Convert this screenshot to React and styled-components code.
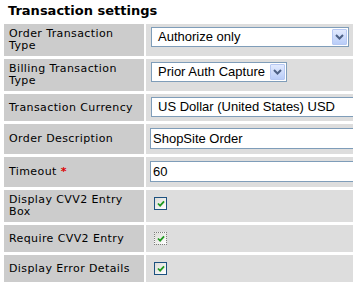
import React from 'react'
import styled, { createGlobalStyle } from 'styled-components'

const GlobalStyle = createGlobalStyle`
  html, body {
    margin: 0;
    padding: 0;
    background: #ffffff;
    overflow: hidden;
  }
`

const Page = styled.div`
  padding: 0 2px;
  font-family: "DejaVu Sans", Verdana, sans-serif;
  color: #000;
`

const Title = styled.h2`
  margin: 0 0 0 6px;
  height: 21px;
  padding-top: 3px;
  box-sizing: border-box;
  font-size: 13px;
  line-height: 16px;
  font-weight: bold;
`

const Table = styled.table`
  border-collapse: separate;
  border-spacing: 2px 3px;
  width: 430px;
`

const Label = styled.td`
  width: 130px;
  padding: 4px 5px;
  background: #cccccc;
  font-size: 11px;
  line-height: 12px;
  letter-spacing: 0.4px;
  vertical-align: middle;
`

const Value = styled.td`
  padding: 3px 4px 4px 4px;
  background: #dddddd;
  vertical-align: top;
`

const Required = styled.span`
  color: #dd0000;
  font-weight: bold;
`

const SelectBox = styled.div`
  display: flex;
  width: ${(p) => p.width}px;
  height: 20px;
  margin: 0 1px;
  box-sizing: border-box;
  border: 1px solid #7f9db9;
  background: #fff;
`

const SelectText = styled.div`
  flex: 1;
  padding-left: 6px;
  font-family: "Liberation Sans", Arial, sans-serif;
  font-size: 13px;
  line-height: 18px;
  white-space: nowrap;
  overflow: hidden;
`

const ArrowButton = styled.div`
  width: 15px;
  margin: 1px;
  box-sizing: border-box;
  border: 1px solid #b6c8f3;
  border-radius: 1px;
  background: linear-gradient(#e2eafe, #b9cdf8);
  display: flex;
  align-items: center;
  justify-content: center;
`

const TextInput = styled.input`
  display: block;
  width: 260px;
  height: 21px;
  margin: 1px 0;
  box-sizing: border-box;
  border: 1px solid #7f9db9;
  padding: 0 2px;
  font-family: "Liberation Sans", Arial, sans-serif;
  font-size: 13px;
  color: #000;
  background: #fff;
  outline: none;
`

const Check = styled.span`
  display: flex;
  align-items: center;
  justify-content: center;
  width: 13px;
  height: 13px;
  margin: 4px 4px 3px 4px;
  box-sizing: border-box;
  border: 1px ${(p) => (p.focused ? 'dotted #7d7d7d' : 'solid #1c5180')};
  background: linear-gradient(135deg, #dcdcd7, #ffffff);
`

const Select = ({ width, children, arrow = true }) => (
  <SelectBox width={width}>
    <SelectText>{children}</SelectText>
    {arrow && (
      <ArrowButton>
        <svg width="9" height="6" viewBox="0 0 9 6">
          <polyline points="1,1 4.5,4.5 8,1" fill="none" stroke="#4d6185" strokeWidth="2" />
        </svg>
      </ArrowButton>
    )}
  </SelectBox>
)

const CheckBox = ({ focused }) => (
  <Check focused={focused}>
    <svg width="8" height="7" viewBox="0 0 9 8">
      <polyline points="1,4 3.5,6.5 8,1.5" fill="none" stroke="#1f9a1f" strokeWidth="2" />
    </svg>
  </Check>
)

const App = () => {
  return (
    <Page>
      <GlobalStyle />
      <Title>Transaction settings</Title>
      <Table>
        <tbody>
          <tr>
            <Label>Order Transaction Type</Label>
            <Value><Select width={198}>Authorize only</Select></Value>
          </tr>
          <tr>
            <Label>Billing Transaction Type</Label>
            <Value><Select width={136}>Prior Auth Capture</Select></Value>
          </tr>
          <tr>
            <Label>Transaction Currency</Label>
            <Value><Select width={236}>US Dollar (United States) USD</Select></Value>
          </tr>
          <tr>
            <Label>Order Description</Label>
            <Value><TextInput defaultValue="ShopSite Order" /></Value>
          </tr>
          <tr>
            <Label>Timeout <Required>*</Required></Label>
            <Value><TextInput defaultValue="60" /></Value>
          </tr>
          <tr>
            <Label>Display CVV2 Entry Box</Label>
            <Value><CheckBox /></Value>
          </tr>
          <tr>
            <Label>Require CVV2 Entry</Label>
            <Value><CheckBox focused /></Value>
          </tr>
          <tr>
            <Label>Display Error Details</Label>
            <Value><CheckBox /></Value>
          </tr>
        </tbody>
      </Table>
    </Page>
  )
}

export default App
